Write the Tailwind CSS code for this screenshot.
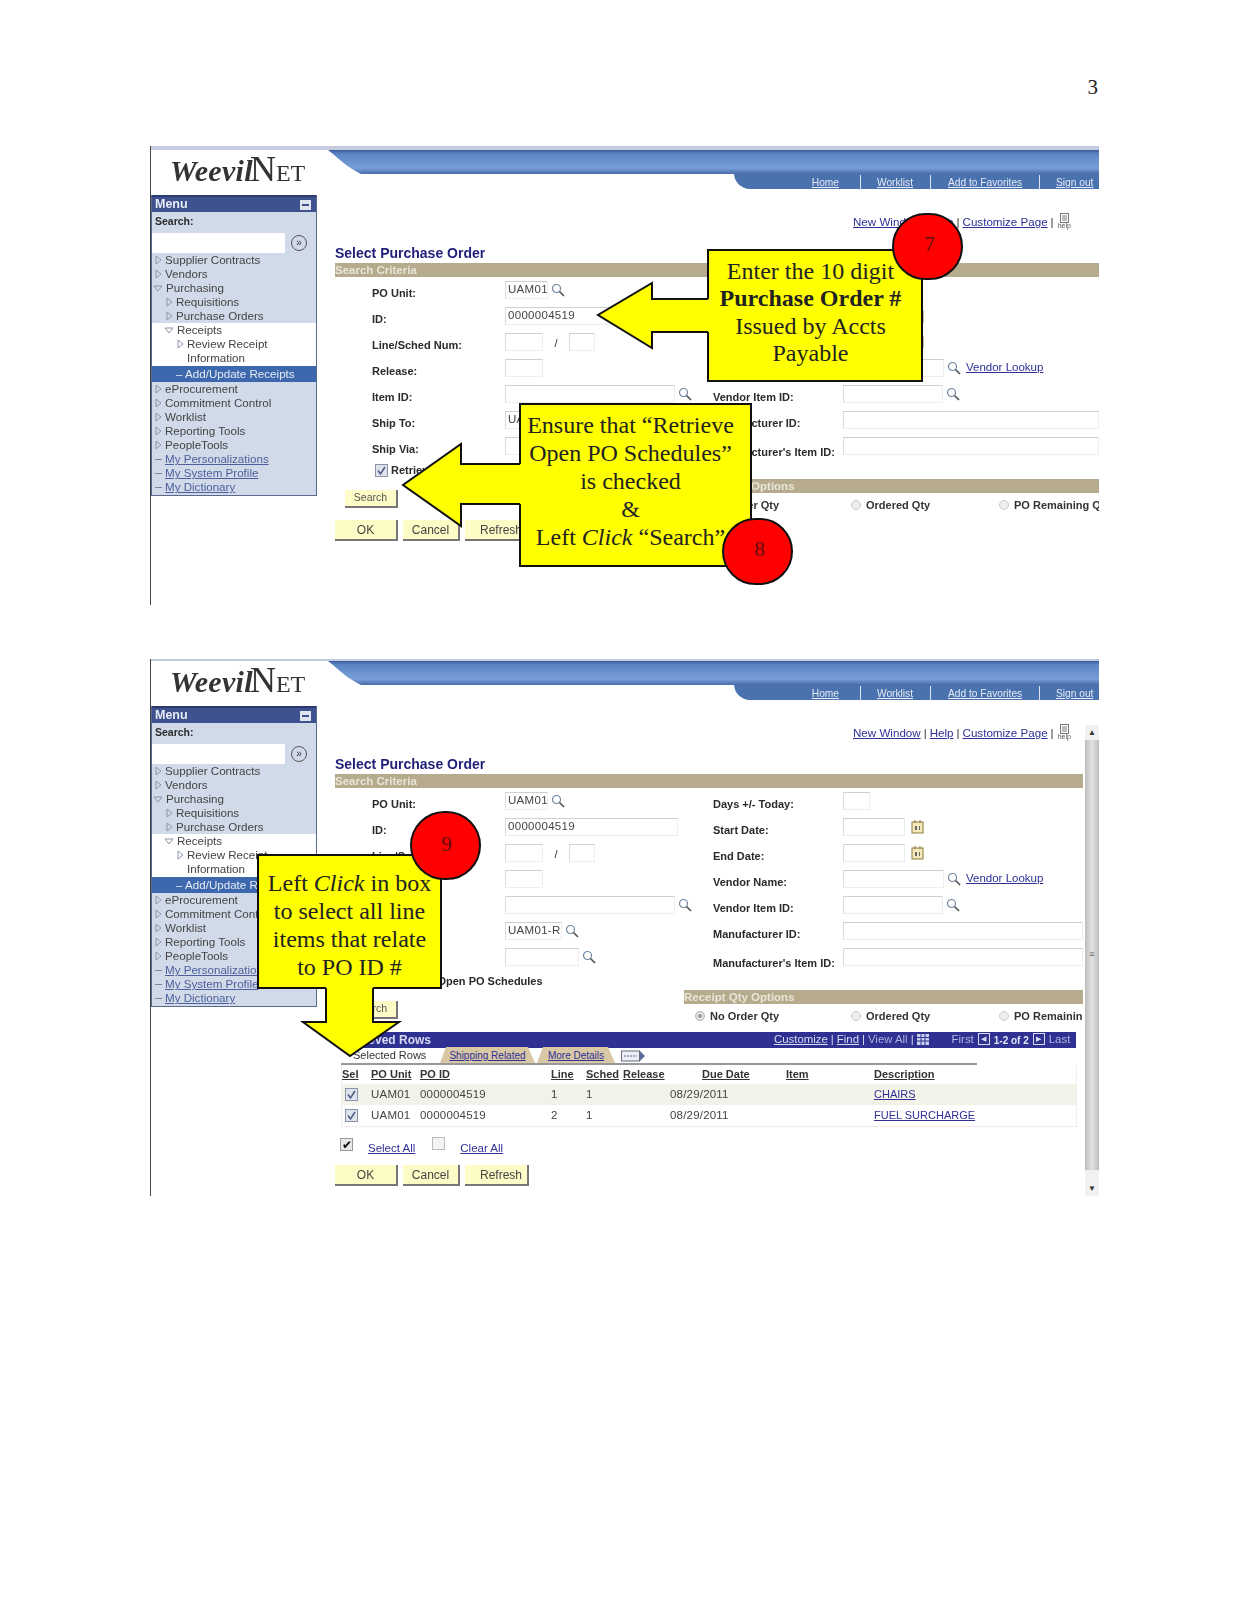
<!DOCTYPE html>
<html lang="en">
<head>
  <meta charset="UTF-8" />
  <title>Select Purchase Order</title>
  <script src="https://cdn.jsdelivr.net/npm/@tailwindcss/browser@4"></script>
</head>
<body class="bg-white">
<div id="page" class="relative w-[1244px] h-[1600px] overflow-hidden font-['Liberation_Sans',Arial,sans-serif] text-[#333]">
  <div class="h-[146px] pt-[75px] pr-[146px] text-right font-['Liberation_Serif',serif] text-[21px] leading-[24px] text-[#222]">3</div>
  <div id="shot1"></div>
  <div id="shot2"></div>

  <!-- callouts lie over the screenshots -->
  <div class="absolute left-[707px] top-[249px] w-[216px] h-[133px] pr-[9px] pb-[6px] bg-[#ffff00] border-2 border-[#111] flex items-center justify-center text-center font-['Liberation_Serif',serif] text-[24px] leading-[27.5px] text-[#222]">
    <p class="whitespace-nowrap">Enter the 10 digit<br><b>Purchase Order #</b><br>Issued by Accts<br>Payable</p>
  </div>
  <div class="absolute left-[519px] top-[403px] w-[233px] h-[164px] pr-[10px] pb-[8px] bg-[#ffff00] border-2 border-[#111] flex items-center justify-center text-center font-['Liberation_Serif',serif] text-[24px] leading-[28px] text-[#222]">
    <p class="whitespace-nowrap">Ensure that “Retrieve<br>Open PO Schedules”<br>is checked<br>&amp;<br>Left <i>Click</i> “Search”</p>
  </div>
  <div class="absolute left-[257px] top-[854px] w-[185px] h-[135px] pt-[6px] bg-[#ffff00] border-2 border-[#111] flex items-center justify-center text-center font-['Liberation_Serif',serif] text-[24px] leading-[28px] text-[#222]">
    <p class="whitespace-nowrap">Left <i>Click</i> in box<br>to select all line<br>items that relate<br>to PO ID #</p>
  </div>
  <svg class="absolute left-0 top-0 pointer-events-none" width="1244" height="1600">
    <polygon points="709,299 652,299 652,283 598,315 652,348 652,332 709,332" fill="#ffff00"/>
    <polyline points="708,299 652,299 652,283 598,315 652,348 652,332 708,332" fill="none" stroke="#111" stroke-width="2"/>
    <polygon points="521,464 461,464 461,444 403,485 461,526 461,504 521,504" fill="#ffff00"/>
    <polyline points="520,464 461,464 461,444 403,485 461,526 461,504 520,504" fill="none" stroke="#111" stroke-width="2"/>
    <polygon points="326,987 326,1022 303,1022 350,1056 399,1022 373,1022 373,987" fill="#ffff00"/>
    <polyline points="326,988 326,1022 303,1022 350,1056 399,1022 373,1022 373,988" fill="none" stroke="#111" stroke-width="2"/>
  </svg>
  <div class="absolute left-[892px] top-[213px] w-[71px] h-[67px] pl-[4px] rounded-full bg-[#ff0000] border-2 border-[#111] flex items-center justify-center font-['Liberation_Serif',serif] text-[21px] text-[#5c1010] pb-[4px]">7</div>
  <div class="absolute left-[722px] top-[518px] w-[71px] h-[67px] pl-[4px] pb-[3px] rounded-full bg-[#ff0000] border-2 border-[#111] flex items-center justify-center font-['Liberation_Serif',serif] text-[21px] text-[#5c1010]">8</div>
  <div class="absolute left-[410px] top-[811px] w-[71px] h-[69px] pb-[2px] pl-[2px] rounded-full bg-[#ff0000] border-2 border-[#111] flex items-center justify-center font-['Liberation_Serif',serif] text-[21px] text-[#5c1010]">9</div>
</div>

<script>
  // small icons used in both screenshots
  const mag = `<svg class="w-[14px] h-[14px] ml-[3px] mb-[4px] shrink-0" viewBox="0 0 14 14" fill="none"><circle cx="5.5" cy="5.5" r="4" stroke="#6d86a0" stroke-width="1.2"/><path d="M8.5 8.5L13 13" stroke="#555" stroke-width="1.7"/></svg>`;
  const triR = `<svg class="w-[7px] h-[10px] shrink-0" viewBox="0 0 7 10" fill="none"><path d="M1 1L6 5L1 9Z" stroke="#8b96a8"/></svg>`;
  const triD = `<svg class="w-[10px] h-[7px] shrink-0" viewBox="0 0 10 7" fill="none"><path d="M1 1L9 1L5 6Z" stroke="#8b96a8"/></svg>`;
  const cal = `<svg class="w-[13px] h-[14px] ml-[6px] mb-[5px] shrink-0" viewBox="0 0 13 14" fill="#f4e9b8"><rect x="1" y="2" width="11" height="11" stroke="#8a7a3c"/><path d="M4 0V3M9 0V3" stroke="#8a7a3c"/><path d="M4 6H6V10H4ZM8 6H9V10H8Z" fill="#666"/></svg>`;
  const check = `<svg class="w-[13px] h-[13px] shrink-0" viewBox="0 0 13 13"><rect x="0.5" y="0.5" width="12" height="12" fill="#dfe3ee" stroke="#8a93a8"/><path d="M3 6.5L5.5 10L10 3" fill="none" stroke="#4a5a80" stroke-width="1.5"/></svg>`;
  const dash = `<span class="w-[7px] h-px bg-[#7b8799] shrink-0"></span>`;

  const label = t => `<span class="w-[133px] mt-[2px] shrink-0 text-[11px] font-bold text-[#2a2a2a]">${t}</span>`;
  const labelR = t => `<span class="w-[130px] mt-[2px] shrink-0 text-[11px] font-bold text-[#2a2a2a] whitespace-nowrap">${t}</span>`;
  const input = (cls, v = '') => `<span class="${cls} h-[18px] mb-[4px] shrink-0 px-[2px] overflow-hidden whitespace-nowrap border border-[#eee] border-t-[#cfcfcf] border-l-[#dcdcdc] text-[11.5px] leading-[15px] text-[#444] tracking-[0.3px] bg-white">${v}</span>`;
  const row = inner => `<div class="h-[26px] flex items-center">${inner}</div>`;

  const btn = (cls, t) => `<span class="${cls} h-[21px] flex items-center justify-center bg-[#fdfcc6] border-r-2 border-b-2 border-[#777] text-[12px] text-[#444]">${t}</span>`;

  const menuRow = (cls, icon, text) => `<div class="${cls} h-[14px] flex items-center gap-[3px] text-[11.6px] text-[#444] whitespace-nowrap">${icon}<span>${text}</span></div>`;
  const menuLink = t => `<div class="pl-[3px] h-[14px] flex items-center gap-[3px] text-[11.6px] whitespace-nowrap">${dash}<span class="text-[#4d5f9c] underline">${t}</span></div>`;

  const sidebar = `
    <aside class="w-[166px] h-[301px] shrink-0 bg-[#d1dae9] border border-[#5a6a8c] border-t-0">
      <div class="h-[17px] bg-[#3f5290] border-t-2 border-[#2c3a70] flex items-center justify-between pl-[3px] pr-[5px] text-[12.5px] font-bold text-[#e8ecf6]">Menu<span class="w-[11px] h-[10px] bg-[#dfe4ef] flex items-center justify-center"><span class="w-[7px] h-[2px] bg-[#3f5290]"></span></span></div>
      <div class="h-[20px] flex items-center pl-[3px] text-[10.5px] font-bold text-[#2a2a2a]">Search:</div>
      <div class="h-[21px] flex items-center">
        <span class="w-[133px] h-[20px] bg-white"></span>
        <span class="ml-[6px] w-[16px] h-[16px] rounded-full border border-[#555] flex items-center justify-center text-[10px] leading-[10px] text-[#333]">»</span>
      </div>
      ${menuRow('pl-[3px]', triR, 'Supplier Contracts')}
      ${menuRow('pl-[3px]', triR, 'Vendors')}
      ${menuRow('pl-[1px]', triD, 'Purchasing')}
      ${menuRow('pl-[14px]', triR, 'Requisitions')}
      ${menuRow('pl-[14px]', triR, 'Purchase Orders')}
      <div class="bg-white h-[43px]">
        ${menuRow('pl-[12px]', triD, 'Receipts')}
        ${menuRow('pl-[25px]', triR, 'Review Receipt')}
        ${menuRow('pl-[35px]', '', 'Information')}
      </div>
      <div class="h-[16px] bg-[#3e68ad] pl-[24px] flex items-center text-[11.6px] text-[#e6ecf6] whitespace-nowrap">– Add/Update Receipts</div>
      ${menuRow('pl-[3px]', triR, 'eProcurement')}
      ${menuRow('pl-[3px]', triR, 'Commitment Control')}
      ${menuRow('pl-[3px]', triR, 'Worklist')}
      ${menuRow('pl-[3px]', triR, 'Reporting Tools')}
      ${menuRow('pl-[3px]', triR, 'PeopleTools')}
      ${menuLink('My Personalizations')}
      ${menuLink('My System Profile')}
      ${menuLink('My Dictionary')}
    </aside>`;

  const banner = `
    <div class="h-[45px] flex">
      <div class="w-[177px] shrink-0 pl-[19px] pt-[2px] font-['Liberation_Serif',serif] text-[#333] leading-[34px] whitespace-nowrap">
        <i class="text-[30px] font-bold tracking-[0.3px]">Weevil</i><span class="text-[36px] -ml-[3px]">N</span><span class="text-[24px]">ET</span>
      </div>
      <div class="flex-1 flex flex-col">
        <svg class="w-[771px] h-[24px] block" viewBox="0 0 771 24">
          <defs><linearGradient id="band" x1="0" y1="0" x2="0" y2="1"><stop offset="0" stop-color="#3a5a9c"/><stop offset="0.15" stop-color="#5a83c2"/><stop offset="0.75" stop-color="#789fd6"/><stop offset="1" stop-color="#4a6cab"/></linearGradient></defs>
          <path d="M0 0H771V24H33C20 18 10 8 0 0Z" fill="url(#band)"/>
        </svg>
        <nav class="self-end w-[365px] h-[16px] -mt-px pt-[3px] bg-[#4a72ae] rounded-bl-[22px] flex items-center text-[10.2px] text-[#e4ebf6] underline">
          <span class="w-[126px] text-right pr-[21px]">Home</span>
          <span class="w-[70px] pl-[16px] border-l border-[#dfe7f3]">Worklist</span>
          <span class="w-[109px] pl-[17px] border-l border-[#dfe7f3] whitespace-nowrap">Add to Favorites</span>
          <span class="w-[60px] pl-[16px] border-l border-[#dfe7f3] whitespace-nowrap">Sign out</span>
        </nav>
      </div>
    </div>`;

  const linksRow = `
    <div class="mt-[19px] pl-[518px] h-[16px] flex items-center gap-[3px] text-[11.6px] whitespace-nowrap text-[#333]">
      <span class="text-[#2f2f96] underline">New Window</span>|<span class="text-[#2f2f96] underline">Help</span>|<span class="text-[#2f2f96] underline">Customize Page</span>|
      <span class="flex flex-col items-center leading-[6px] ml-[1px] mb-[3px]"><svg class="w-[12px] h-[10px]" viewBox="0 0 12 10" fill="none"><rect x="2.5" y="0.5" width="8" height="9" stroke="#777"/><path d="M4 3H9M4 5H9M4 7H9" stroke="#777"/></svg><span class="text-[7px] text-[#555]">help</span></span>
    </div>`;

  const titleRow = `
    <h1 class="mt-[14px] h-[19px] text-[14px] leading-[18px] font-bold text-[#1f1f78]">Select Purchase Order</h1>
    <div class="h-[14px] bg-[#b6ab8c] text-[11.5px] leading-[14px] font-bold text-[#e9e5d8]">Search Criteria</div>`;

  const formBlock = (shipTo, shipVia) => `
    <div class="mt-[2px] h-[231px] flex">
      <div class="w-[349px] shrink-0 pl-[37px]">
        ${row(label('PO Unit:') + input('w-[43px]', 'UAM01') + mag)}
        ${row(label('ID:') + input('w-[173px]', '0000004519'))}
        ${row(label('Line/Sched Num:') + input('w-[38px]') + '<span class="w-[26px] mb-[2px] text-center text-[11px]">/</span>' + input('w-[26px]'))}
        ${row(label('Release:') + input('w-[38px]'))}
        ${row(label('Item ID:') + input('w-[170px]') + mag)}
        ${row(label('Ship To:') + shipTo)}
        ${row(label('Ship Via:') + shipVia)}
        <div class="h-[20px] -mt-px flex items-center pl-[3px] gap-[3px] text-[11px] font-bold text-[#2a2a2a] whitespace-nowrap">${check}Retrieve Open PO Schedules</div>
        <div class="mt-[10px] -ml-[27px] w-[53px] h-[18px] flex items-center justify-center bg-[#fdfcc6] border-r-2 border-b-2 border-[#777] text-[10.5px] text-[#555]">Search</div>
      </div>
      <div class="flex-1 min-w-0">
        <div class="pl-[29px]">
          ${row(labelR('Days +/- Today:') + input('w-[27px]'))}
          ${row(labelR('Start Date:') + input('w-[62px]') + cal)}
          ${row(labelR('End Date:') + input('w-[62px]') + cal)}
          ${row(labelR('Vendor Name:') + input('w-[101px]') + mag + '<span class="ml-[5px] mb-[4px] text-[11.5px] text-[#2f2f96] underline whitespace-nowrap">Vendor Lookup</span>')}
          ${row(labelR('Vendor Item ID:') + input('w-[100px]') + mag)}
          ${row(labelR('Manufacturer ID:') + input('flex-1 min-w-0'))}
          ${row(labelR('<span class="relative top-[3px]">Manufacturer\'s Item ID:</span>') + input('flex-1 min-w-0'))}
        </div>
        <div class="mt-[18px] h-[14px] bg-[#b6ab8c] text-[11.5px] leading-[14px] font-bold text-[#e9e5d8]">Receipt Qty Options</div>
        <div class="h-[24px] pl-[11px] flex items-center text-[11px] font-bold text-[#333] whitespace-nowrap">
          <span class="w-[156px] shrink-0 flex items-center gap-[5px]"><span class="w-[10px] h-[10px] rounded-full border border-[#bbb] bg-[#999] ring-2 ring-inset ring-[#e5e5e5]"></span>No Order Qty</span>
          <span class="w-[148px] shrink-0 flex items-center gap-[5px]"><span class="w-[10px] h-[10px] rounded-full border border-[#ccc] bg-[#eee]"></span>Ordered Qty</span>
          <span class="shrink-0 flex items-center gap-[5px]"><span class="w-[10px] h-[10px] rounded-full border border-[#ccc] bg-[#eee]"></span>PO Remaining Qty</span>
        </div>
      </div>
    </div>`;

  const buttons = `
    <div class="flex gap-[5px]">
      ${btn('w-[63px]', 'OK')}
      ${btn('w-[57px]', 'Cancel')}
      ${btn('w-[64px] pl-[10px] text-[10.5px]', 'Refresh')}
    </div>`;

  const tableRow = (bg, line) => `
    <div class="${bg} h-[21px] grid grid-cols-[29px_49px_131px_35px_37px_79px_84px_88px_1fr] items-center text-[11.5px] text-[#444] tracking-[0.2px] whitespace-nowrap">
      <span class="pl-[3px]">${check}</span><span>UAM01</span><span>0000004519</span><span>${line}</span><span>1</span><span></span><span class="-ml-[32px]">08/29/2011</span><span></span><span class="text-[11px] tracking-normal text-[#2f2f96] underline">${line === 1 ? 'CHAIRS' : 'FUEL SURCHARGE'}</span>
    </div>`;

  const table = `
    <div class="mt-[11px] ml-[5px] w-[736px] h-[16px] bg-[#2e3192] flex items-center text-[11.4px] text-[#d8dbf0] whitespace-nowrap">
      <b class="pl-[1px] text-[12px]">Retrieved Rows</b>
      <span class="ml-[343px] underline">Customize</span><span class="mx-[3px]">|</span><span class="underline">Find</span><span class="mx-[3px]">|</span><span class="text-[#a9aedc]">View All</span><span class="mx-[3px]">|</span>
      <svg class="w-[12px] h-[11px] mb-[2px]" viewBox="0 0 12 11"><path d="M0 0H12V11H0Z" fill="#c8d0ee"/><path d="M0 3.5H12M0 7H12M4 0V11M8 0V11" stroke="#2e3192"/></svg>
      <span class="ml-[23px] text-[#b4b8e2]">First</span>
      <span class="ml-[4px] w-[12px] h-[12px] border border-[#d8dbf0] flex items-center justify-center text-[7px] text-[#d8dbf0] mb-[2px]">◀</span>
      <b class="ml-[4px] text-[10px] text-[#e4e6f5]">1-2 of 2</b>
      <span class="ml-[4px] w-[12px] h-[12px] border border-[#d8dbf0] flex items-center justify-center text-[7px] text-[#d8dbf0] mb-[2px]">▶</span>
      <span class="ml-[4px] text-[#b4b8e2]">Last</span>
    </div>
    <div class="ml-[6px] w-[636px] h-[17px] flex items-end border-b-2 border-[#999] text-[10px] whitespace-nowrap">
      <span class="w-[99px] h-[16px] pl-[12px] text-[#333] text-[11px]">Selected Rows</span>
      <span class="w-[95px] h-[16px] flex items-center justify-center bg-[#d8c8a6] [clip-path:polygon(6px_0,calc(100%-7px)_0,100%_100%,0_100%)] text-[#2f2f96] underline">Shipping Related</span>
      <span class="ml-[2px] w-[78px] h-[16px] flex items-center justify-center bg-[#d8c8a6] [clip-path:polygon(6px_0,calc(100%-7px)_0,100%_100%,0_100%)] text-[#2f2f96] underline">More Details</span>
      <svg class="ml-[6px] mb-[1px] w-[25px] h-[12px]" viewBox="0 0 25 12" fill="none"><rect x="0.5" y="1" width="18" height="10" fill="#eef0f8" stroke="#667"/><path d="M3 6H16" stroke="#667" stroke-dasharray="2 1"/><path d="M19 1L24 6L19 11Z" fill="#5a6a9c"/></svg>
    </div>
    <div class="ml-[6px] w-[736px] border border-[#eee] border-t-0">
      <div class="h-[19px] grid grid-cols-[29px_49px_131px_35px_37px_79px_84px_88px_1fr] items-center text-[11px] font-bold text-[#333] underline whitespace-nowrap">
        <span>Sel</span><span>PO Unit</span><span>PO ID</span><span>Line</span><span>Sched</span><span>Release</span><span>Due Date</span><span>Item</span><span>Description</span>
      </div>
      ${tableRow('bg-[#f3f2e8]', 1)}
      ${tableRow('bg-white', 2)}
    </div>
    <div class="mt-[7px] ml-[5px] h-[22px] flex text-[11.5px] text-[#2f2f96] whitespace-nowrap">
      <span class="w-[13px] h-[13px] mt-[4px] bg-[#e8e8e8] border border-[#999] flex items-center justify-center text-[12px] leading-[12px] text-black">✔</span>
      <span class="ml-[15px] mt-[6px] underline">Select All</span>
      <span class="ml-[17px] mt-[3px] w-[13px] h-[13px] bg-[#f4f4f4] border border-[#bbb]"></span>
      <span class="ml-[15px] mt-[6px] underline">Clear All</span>
    </div>
    <div class="mt-[9px]">${buttons}</div>`;

  document.getElementById('shot1').innerHTML = `
    <section class="ml-[150px] w-[949px] h-[459px] border-l border-[#444] blur-[0.3px]">
      <div class="h-[4px] bg-[#c6cce0]"></div>
      ${banner}
      <div class="flex">
        ${sidebar}
        <main class="ml-[18px] w-[764px] overflow-hidden">
          ${linksRow}
          ${titleRow}
          ${formBlock(input('w-[60px]', 'UAM01-R') + mag, input('w-[74px]') + mag)}
          <div class="mt-[10px]">${buttons}</div>
        </main>
      </div>
    </section>`;

  document.getElementById('shot2').innerHTML = `
    <section class="mt-[54px] ml-[150px] w-[949px] h-[537px] border-l border-[#444] blur-[0.3px]">
      <div class="h-[2px] bg-[#c6cce0]"></div>
      ${banner}
      <div class="flex">
        ${sidebar}
        <main class="ml-[18px] w-[748px] overflow-hidden">
          ${linksRow}
          ${titleRow}
          ${formBlock(input('w-[57px]', 'UAM01-R') + mag, input('w-[74px]') + mag)}
          ${table}
        </main>
        <div class="ml-[2px] mt-[19px] w-[14px] h-[471px] flex flex-col bg-[#f1f1f1]">
          <span class="h-[15px] text-[8px] leading-[15px] text-center text-[#333]">▲</span>
          <span class="h-[430px] bg-gradient-to-r from-[#bdbdbd] via-[#e2e2e2] to-[#bdbdbd] flex items-center justify-center text-[9px] text-[#666]">≡</span>
          <span class="mt-auto h-[15px] text-[8px] leading-[15px] text-center text-[#333]">▼</span>
        </div>
      </div>
    </section>`;
</script>
</body>
</html>
